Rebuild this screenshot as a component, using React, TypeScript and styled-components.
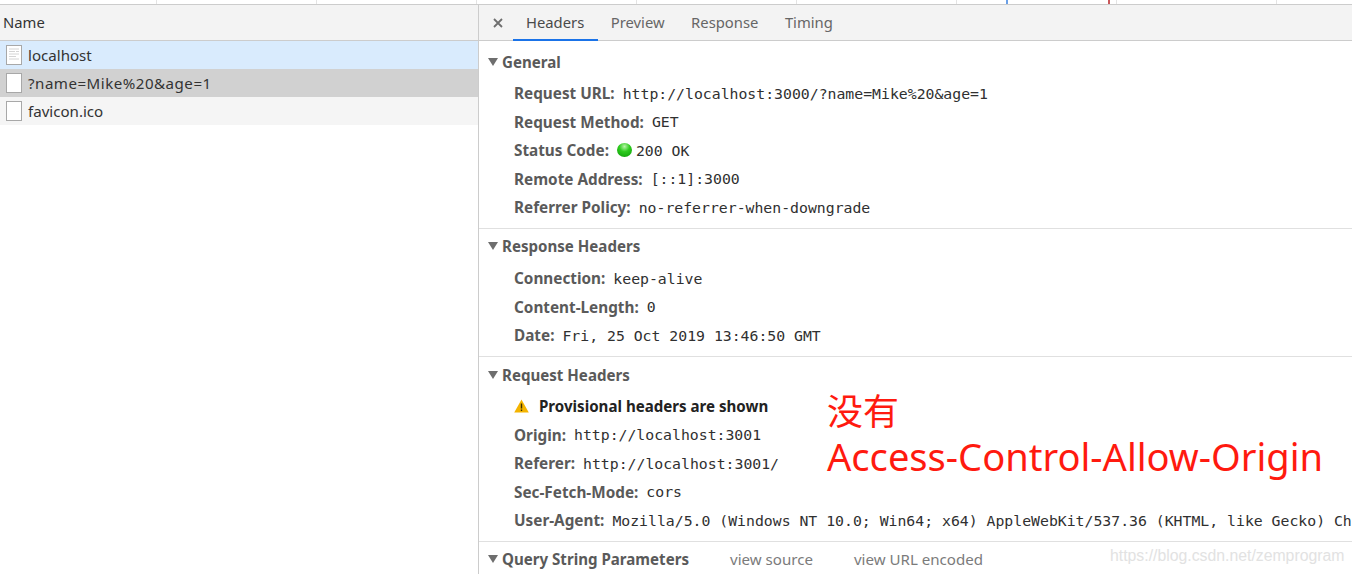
import { createGlobalStyle } from "styled-components";
import styled from "styled-components";

const GlobalStyle = createGlobalStyle`
    html, body {
        margin: 0;
        padding: 0;
        background: #ffffff;
    }
    body {
        width: 1352px;
        height: 574px;
        overflow: hidden;
        font-family: "Noto Sans", sans-serif;
    }
`;

const Page = styled.div`
    position: relative;
    width: 1352px;
    height: 574px;
    overflow: hidden;
`;

const Overview = styled.div`
    position: relative;
    display: flex;
    height: 4px;
    border-bottom: 1px solid #cccccc;
`;

const OverviewCell = styled.div`
    flex: 0 0 160px;
    box-sizing: border-box;
    border-right: 1px solid #e4e4e4;
    &:first-child {
        flex-basis: 157px;
    }
`;

const Marker = styled.div<{ $color: string; $left: number }>`
    position: absolute;
    top: 0;
    left: ${(p) => p.$left}px;
    width: 2px;
    height: 4px;
    background: ${(p) => p.$color};
`;

const Split = styled.div`
    display: flex;
    height: 569px;
`;

const Sidebar = styled.div`
    flex: 0 0 478px;
    border-right: 1px solid #cccccc;
`;

const NameHeader = styled.div`
    display: flex;
    align-items: center;
    box-sizing: border-box;
    height: 36px;
    padding: 0 0 2px 3px;
    background: #f3f3f3;
    border-bottom: 1px solid #cccccc;
    font-size: 14.8px;
    color: #333333;
`;

const FileRow = styled.div<{ $bg: string; $spacing?: number }>`
    display: flex;
    align-items: center;
    height: 28px;
    padding-left: 6px;
    background: ${(p) => p.$bg};
    font-size: 15.1px;
    letter-spacing: ${(p) => p.$spacing ?? 0}px;
    color: #333333;
`;

const FileIconBox = styled.svg`
    flex: none;
    margin-right: 6px;
`;

const Details = styled.div`
    flex: 1;
    min-width: 0;
    overflow: hidden;
`;

const TabBar = styled.div`
    display: flex;
    align-items: stretch;
    height: 35px;
    background: #f3f3f3;
    border-bottom: 1px solid #cccccc;
`;

const CloseBox = styled.div`
    display: flex;
    align-items: center;
    justify-content: center;
    box-sizing: border-box;
    width: 34px;
    padding-left: 4px;
    color: #6e6e6e;
`;

const Tab = styled.div<{ $active?: boolean }>`
    display: flex;
    align-items: center;
    box-sizing: border-box;
    height: 36px;
    padding: 0 13.5px 0 13px;
    font-size: 14.8px;
    color: ${(p) => (p.$active ? "#4a4a4a" : "#666666")};
    border-bottom: 2px solid ${(p) => (p.$active ? "#1a73e8" : "transparent")};
`;

const Section = styled.div<{ $height: number; $pad: number }>`
    box-sizing: border-box;
    height: ${(p) => p.$height}px;
    padding-top: ${(p) => p.$pad}px;
    border-bottom: 1px solid #e0e0e0;
    &:last-child {
        border-bottom: none;
    }
`;

const SectionTitle = styled.div`
    display: flex;
    align-items: center;
    height: 28px;
    padding-left: 9px;
    font-size: 15.1px;
    font-weight: 700;
    color: #5a5a5a;
    white-space: nowrap;
`;

const Triangle = styled.span`
    width: 0;
    height: 0;
    margin-right: 4px;
    border-left: 5px solid transparent;
    border-right: 5px solid transparent;
    border-top: 8px solid #6e6e6e;
`;

const SectionLink = styled.span`
    margin-left: 41px;
    font-weight: 400;
    color: #7b7b7b;
`;

const Rows = styled.div<{ $top: number }>`
    padding-top: ${(p) => p.$top}px;
    padding-left: 35px;
`;

const Row = styled.div`
    display: flex;
    align-items: center;
    height: 28.5px;
    white-space: nowrap;
`;

const Key = styled.span`
    margin-right: 8px;
    font-size: 15.3px;
    font-weight: 700;
    color: #5a5a5a;
`;

const Value = styled.span`
    font-family: "DejaVu Sans Mono", monospace;
    font-size: 14.8px;
    color: #303030;
`;

const StatusDot = styled.span`
    flex: none;
    width: 15px;
    height: 14px;
    margin-right: 4px;
    border-radius: 50%;
    background: radial-gradient(circle at 50% 25%, #b8f5a8 0%, #2ecb1e 40%, #0a9a06 100%);
`;

const ProvisionalText = styled.span`
    font-size: 15.1px;
    font-weight: 700;
    color: #222222;
`;

const WarnIcon = styled.svg`
    flex: none;
    margin-right: 10px;
`;

const Annotation = styled.div`
    position: absolute;
    left: 827px;
    top: 389px;
    color: #ff1a0f;
    font-family: "Noto Sans", "Noto Sans CJK SC", sans-serif;
    line-height: 45px;
`;

const AnnotationCn = styled.div`
    font-size: 36px;
`;

const AnnotationEn = styled.div`
    font-size: 38.1px;
    white-space: nowrap;
`;

const Watermark = styled.div`
    position: absolute;
    left: 1110px;
    top: 547px;
    font-family: "Liberation Sans", sans-serif;
    font-size: 15.8px;
    color: #e2e2e2;
    white-space: nowrap;
`;

const FileIcon = ({ lines }: { lines?: boolean }) => (
    <FileIconBox width="16" height="20" viewBox="0 0 16 20">
        <rect x="0.5" y="0.5" width="15" height="19" fill="#ffffff" stroke="#a8a8a8" />
        {lines && (
            <path d="M3 4h10M3 6.5h6M10 6.5h3M3 9h10M3 11.5h7M3 14h10" stroke="#d4d4d4" fill="none" />
        )}
    </FileIconBox>
);

const cells = [0, 1, 2, 3, 4, 5, 6, 7, 8];

const App = () => {
    return (
        <Page>
            <GlobalStyle />
            <Overview>
                {cells.map((c) => (
                    <OverviewCell key={c} />
                ))}
                <Marker $color="#6a9fe6" $left={1006} />
                <Marker $color="#c9585a" $left={1108} />
            </Overview>
            <Split>
                <Sidebar>
                    <NameHeader>Name</NameHeader>
                    <FileRow $bg="#d9ebfd">
                        <FileIcon lines />
                        localhost
                    </FileRow>
                    <FileRow $bg="#d1d1d1" $spacing={0.5}>
                        <FileIcon />
                        ?name=Mike%20&amp;age=1
                    </FileRow>
                    <FileRow $bg="#f5f5f5">
                        <FileIcon />
                        favicon.ico
                    </FileRow>
                </Sidebar>
                <Details>
                    <TabBar>
                        <CloseBox>
                            <svg width="10" height="10" viewBox="0 0 10 10">
                                <path d="M1 1l8 8M9 1l-8 8" stroke="currentColor" strokeWidth="1.8" fill="none" />
                            </svg>
                        </CloseBox>
                        <Tab $active>Headers</Tab>
                        <Tab>Preview</Tab>
                        <Tab>Response</Tab>
                        <Tab>Timing</Tab>
                    </TabBar>
                    <Section $height={188} $pad={7}>
                        <SectionTitle>
                            <Triangle />
                            General
                        </SectionTitle>
                        <Rows $top={3}>
                            <Row>
                                <Key>Request URL:</Key>
                                <Value>http://localhost:3000/?name=Mike%20&amp;age=1</Value>
                            </Row>
                            <Row>
                                <Key>Request Method:</Key>
                                <Value>GET</Value>
                            </Row>
                            <Row>
                                <Key>Status Code:</Key>
                                <StatusDot />
                                <Value>200 OK</Value>
                            </Row>
                            <Row>
                                <Key>Remote Address:</Key>
                                <Value>[::1]:3000</Value>
                            </Row>
                            <Row>
                                <Key>Referrer Policy:</Key>
                                <Value>no-referrer-when-downgrade</Value>
                            </Row>
                        </Rows>
                    </Section>
                    <Section $height={128} $pad={3}>
                        <SectionTitle>
                            <Triangle />
                            Response Headers
                        </SectionTitle>
                        <Rows $top={4}>
                            <Row>
                                <Key>Connection:</Key>
                                <Value>keep-alive</Value>
                            </Row>
                            <Row>
                                <Key>Content-Length:</Key>
                                <Value>0</Value>
                            </Row>
                            <Row>
                                <Key>Date:</Key>
                                <Value>Fri, 25 Oct 2019 13:46:50 GMT</Value>
                            </Row>
                        </Rows>
                    </Section>
                    <Section $height={185} $pad={4}>
                        <SectionTitle>
                            <Triangle />
                            Request Headers
                        </SectionTitle>
                        <Rows $top={3}>
                            <Row>
                                <WarnIcon width="15" height="14" viewBox="0 0 15 14">
                                    <path d="M7.5 0.5L14.8 13.5H0.2Z" fill="#f4b400" />
                                    <path d="M6.8 4.5h1.4v5h-1.4zM6.8 10.5h1.4v1.6h-1.4z" fill="#3a3000" />
                                </WarnIcon>
                                <ProvisionalText>Provisional headers are shown</ProvisionalText>
                            </Row>
                            <Row>
                                <Key>Origin:</Key>
                                <Value>http://localhost:3001</Value>
                            </Row>
                            <Row>
                                <Key>Referer:</Key>
                                <Value>http://localhost:3001/</Value>
                            </Row>
                            <Row>
                                <Key>Sec-Fetch-Mode:</Key>
                                <Value>cors</Value>
                            </Row>
                            <Row>
                                <Key>User-Agent:</Key>
                                <Value>Mozilla/5.0 (Windows NT 10.0; Win64; x64) AppleWebKit/537.36 (KHTML, like Gecko) Ch</Value>
                            </Row>
                        </Rows>
                    </Section>
                    <Section $height={33} $pad={3}>
                        <SectionTitle>
                            <Triangle />
                            Query String Parameters
                            <SectionLink>view source</SectionLink>
                            <SectionLink>view URL encoded</SectionLink>
                        </SectionTitle>
                    </Section>
                </Details>
            </Split>
            <Annotation>
                <AnnotationCn>没有</AnnotationCn>
                <AnnotationEn>Access-Control-Allow-Origin</AnnotationEn>
            </Annotation>
            <Watermark>https://blog.csdn.net/zemprogram</Watermark>
        </Page>
    );
};

export default App;
